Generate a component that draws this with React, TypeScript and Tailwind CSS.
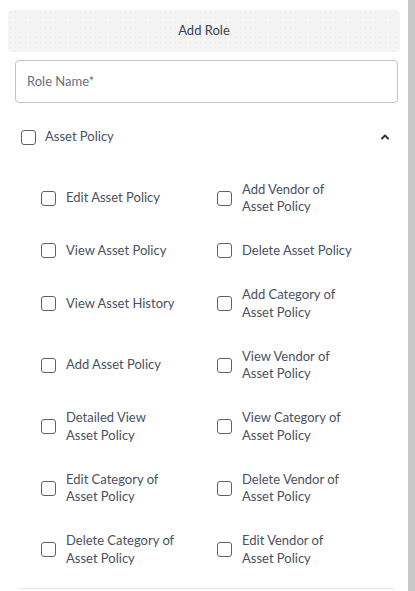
import React from 'react';

// each label is split where the reference wraps it
const permissions: [string[], string[]][] = [
  [['Edit Asset Policy'], ['Add Vendor of', 'Asset Policy']],
  [['View Asset Policy'], ['Delete Asset Policy']],
  [['View Asset History'], ['Add Category of', 'Asset Policy']],
  [['Add Asset Policy'], ['View Vendor of', 'Asset Policy']],
  [['Detailed View', 'Asset Policy'], ['View Category of', 'Asset Policy']],
  [['Edit Category of', 'Asset Policy'], ['Delete Vendor of', 'Asset Policy']],
  [['Delete Category of', 'Asset Policy'], ['Edit Vendor of', 'Asset Policy']],
];

const Box = () => (
  <span className="block w-[15px] h-[15px] shrink-0 rounded-[3px] border-[1.5px] border-[#5b6170] bg-white" />
);

const Perm = ({ lines }: { lines: string[] }) => (
  <label className="flex items-center gap-[10px]">
    <Box />
    <span className="flex flex-col text-[13px] leading-[17.5px] text-[#4b5060]">
      {lines.map((l) => (
        <span key={l}>{l}</span>
      ))}
    </span>
  </label>
);

export default function App() {
  return (
    <div
      className="flex h-[591px] w-[415px] overflow-hidden bg-white"
      style={{ fontFamily: 'Lato, "Noto Sans", sans-serif' }}
    >
      <div className="flex-1">
        {/* Header */}
        <div className="mx-2 mt-[10px] flex h-[42px] items-center justify-center rounded-[4px] bg-[#f4f4f4] bg-[radial-gradient(#e6e6e6_0.7px,transparent_0.7px)] bg-[size:5px_5px]">
          <span className="text-[13px] text-[#3b4150]">Add Role</span>
        </div>

        {/* Role name */}
        <div className="ml-[15px] mr-[10px] mt-2 flex h-[43px] items-center rounded-[4px] border border-[#c4c4c4] px-[11px]">
          <span className="text-[13px] text-[#6b6f78]">Role Name*</span>
        </div>

        {/* Asset Policy group */}
        <div className="ml-[21px] mr-[18px] mt-[26px] flex h-[16px] items-center">
          <Box />
          <span className="ml-[9px] text-[13px] text-[#4b5060]">Asset Policy</span>
          <svg className="ml-auto h-[10px] w-[10px]" viewBox="0 0 10 10" fill="none" stroke="#2f3542" strokeWidth={2} strokeLinecap="round" strokeLinejoin="round">
            <path d="M2 6.5 L5 3.5 L8 6.5" />
          </svg>
        </div>

        <div className="mt-[35.5px] grid grid-cols-[176px_1fr] gap-y-[26.5px] pl-[41px]">
          {permissions.map(([a, b]) => (
            <React.Fragment key={a.join(' ')}>
              <Perm lines={a} />
              <Perm lines={b} />
            </React.Fragment>
          ))}
        </div>

        <div className="ml-[18px] mr-[13px] mt-[21px] border-t border-[#e5e7eb]" />
      </div>

      {/* scrollbar */}
      <div className="w-[7px] bg-[#c8c8c8]" />
    </div>
  );
}
